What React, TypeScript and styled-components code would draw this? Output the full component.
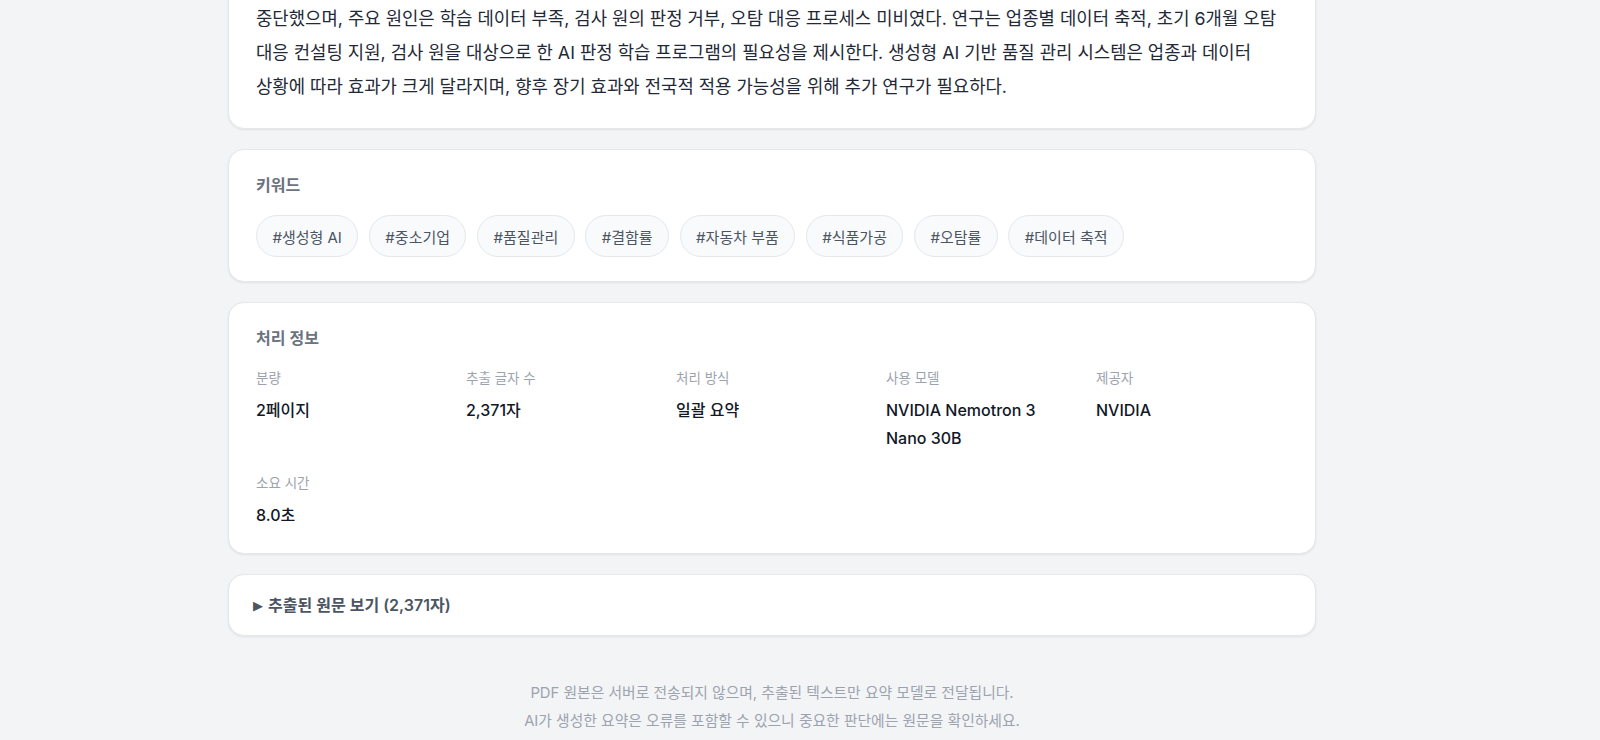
import React from "react";
import styled, { createGlobalStyle } from "styled-components";

const GlobalStyle = createGlobalStyle`
  * { box-sizing: border-box; }
  html, body {
    margin: 0;
    padding: 0;
    background: #f3f4f6;
  }
  body {
    font-family: Inter, "Noto Sans CJK KR", sans-serif;
    color: #111827;
    -webkit-font-smoothing: antialiased;
  }
`;

const Page = styled.div`
  display: flex;
  justify-content: flex-start;
  padding: 0 284px 0 228px;
`;

const Main = styled.main`
  width: 1088px;
  margin-top: -23px;
  display: flex;
  flex-direction: column;
  gap: 20px;
`;

const Card = styled.section<{ $pad?: string }>`
  background: #ffffff;
  border: 1px solid #e5e7eb;
  border-radius: 16px;
  box-shadow: 0 1px 3px rgba(17, 24, 39, 0.05), 0 1px 2px rgba(17, 24, 39, 0.03);
  padding: ${(p) => p.$pad ?? "24px 27px"};
`;

const SummaryText = styled.p`
  margin: 0;
  font-size: 17.8px;
  line-height: 34px;
  color: #1f2937;
  word-break: keep-all;
`;

const SectionTitle = styled.h3`
  margin: 0 0 19px;
  font-size: 16px;
  line-height: 22px;
  font-weight: 600;
  color: #6b7280;
`;

const ChipRow = styled.div`
  display: flex;
  flex-wrap: wrap;
  gap: 10.7px;
`;

const Chip = styled.span`
  display: inline-flex;
  align-items: center;
  height: 42px;
  padding: 0 15.4px;
  border: 1px solid #e5e7eb;
  border-radius: 999px;
  background: #f9fafb;
  font-size: 15px;
  color: #4b5563;
  white-space: nowrap;
`;

const InfoGrid = styled.div`
  display: grid;
  grid-template-columns: repeat(5, 1fr);
  gap: 21px 18px;
`;

const InfoItem = styled.div`
  display: flex;
  flex-direction: column;
  gap: 8px;
  padding-right: 8px;
`;

const InfoLabel = styled.span`
  font-size: 13.5px;
  line-height: 20px;
  color: #9ca3af;
`;

const InfoValue = styled.span`
  font-size: 16px;
  line-height: 28px;
  font-weight: 500;
  color: #111827;
`;

const Details = styled.details`
  margin: 0;
`;

const Toggle = styled.summary`
  list-style: none;
  cursor: pointer;
  display: flex;
  align-items: center;
  gap: 5px;
  font-size: 16px;
  line-height: 28px;
  font-weight: 600;
  color: #4b5563;
  margin-left: -3px;
  &::-webkit-details-marker { display: none; }
`;

const Arrow = styled.span`
  font-family: "DejaVu Sans", sans-serif;
  font-size: 13px;
  line-height: 1;
  color: #4b5563;
`;

const Footer = styled.footer`
  padding-top: 23px;
  text-align: center;
`;

const FooterLine = styled.p`
  margin: 0;
  font-size: 14.8px;
  line-height: 28px;
  color: #9ca3af;
`;

const keywords = [
  "#생성형 AI",
  "#중소기업",
  "#품질관리",
  "#결함률",
  "#자동차 부품",
  "#식품가공",
  "#오탐률",
  "#데이터 축적",
];

const info: { label: string; value: string }[] = [
  { label: "분량", value: "2페이지" },
  { label: "추출 글자 수", value: "2,371자" },
  { label: "처리 방식", value: "일괄 요약" },
  { label: "사용 모델", value: "NVIDIA Nemotron 3 Nano 30B" },
  { label: "제공자", value: "NVIDIA" },
  { label: "소요 시간", value: "8.0초" },
];

export default function App() {
  return (
    <>
      <GlobalStyle />
      <Page>
        <Main>
          <Card>
            <SummaryText>
              중단했으며, 주요 원인은 학습 데이터 부족, 검사 원의 판정 거부, 오탐 대응 프로세스 미비였다. 연구는 업종별 데이터 축적, 초기 6개월 오탐 대응 컨설팅 지원, 검사 원을 대상으로 한 AI 판정 학습 프로그램의 필요성을 제시한다. 생성형 AI 기반 품질 관리 시스템은 업종과 데이터 상황에 따라 효과가 크게 달라지며, 향후 장기 효과와 전국적 적용 가능성을 위해 추가 연구가 필요하다.
            </SummaryText>
          </Card>

          <Card>
            <SectionTitle>키워드</SectionTitle>
            <ChipRow>
              {keywords.map((k) => (
                <Chip key={k}>{k}</Chip>
              ))}
            </ChipRow>
          </Card>

          <Card>
            <SectionTitle>처리 정보</SectionTitle>
            <InfoGrid>
              {info.map((it) => (
                <InfoItem key={it.label}>
                  <InfoLabel>{it.label}</InfoLabel>
                  <InfoValue>{it.value}</InfoValue>
                </InfoItem>
              ))}
            </InfoGrid>
          </Card>

          <Card $pad="16px 27px">
            <Details>
              <Toggle>
                <Arrow>▶</Arrow>
                추출된 원문 보기 (2,371자)
              </Toggle>
            </Details>
          </Card>

          <Footer>
            <FooterLine>PDF 원본은 서버로 전송되지 않으며, 추출된 텍스트만 요약 모델로 전달됩니다.</FooterLine>
            <FooterLine>AI가 생성한 요약은 오류를 포함할 수 있으니 중요한 판단에는 원문을 확인하세요.</FooterLine>
          </Footer>
        </Main>
      </Page>
    </>
  );
}
